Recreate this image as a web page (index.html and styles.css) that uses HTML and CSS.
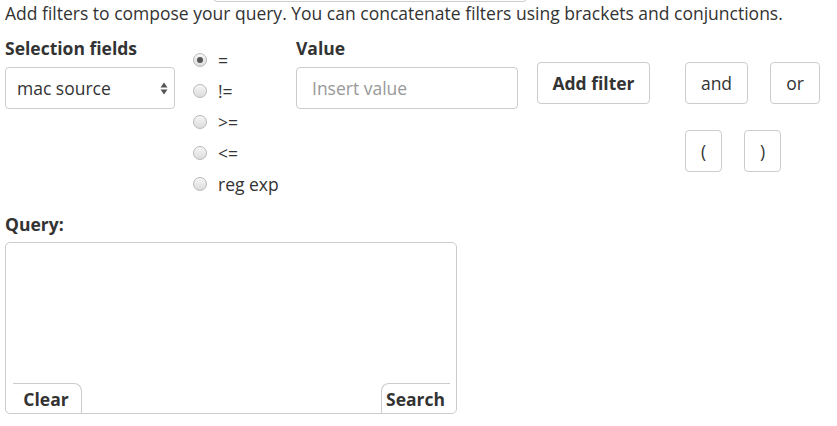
FILE: index.html
```html
<!DOCTYPE html>
<html>
<head>
<meta charset="utf-8">
<link rel="stylesheet" href="styles.css">
</head>
<body>
<div class="cut-box"></div>
<p class="intro">Add filters to compose your query. You can concatenate filters using brackets and conjunctions.</p>
<div class="filters">
  <div class="col-field">
    <div class="label">Selection fields</div>
    <div class="select">
      <span>mac source</span>
      <svg class="arrows" width="8" height="13" viewBox="0 0 8 13"><path d="M4 0.5 L7.5 5.5 L0.5 5.5 Z" fill="#555"/><path d="M0.5 7.5 L7.5 7.5 L4 12.5 Z" fill="#555"/></svg>
    </div>
  </div>
  <div class="col-ops">
    <label class="radio"><span class="dot checked"></span><span>=</span></label>
    <label class="radio"><span class="dot"></span><span>!=</span></label>
    <label class="radio"><span class="dot"></span><span>&gt;=</span></label>
    <label class="radio"><span class="dot"></span><span>&lt;=</span></label>
    <label class="radio"><span class="dot"></span><span>reg exp</span></label>
  </div>
  <div class="col-value">
    <div class="label">Value</div>
    <div class="input">Insert value</div>
  </div>
  <div class="col-add">
    <button class="btn btn-add">Add filter</button>
  </div>
  <div class="col-conj">
    <div class="conj-row">
      <button class="btn btn-and">and</button>
      <button class="btn btn-or">or</button>
    </div>
    <div class="bracket-row">
      <button class="btn btn-br">(</button>
      <button class="btn btn-br">)</button>
    </div>
  </div>
</div>
<div class="label query-label">Query:</div>
<div class="query-box">
  <div class="query-tabs">
    <button class="tab tab-clear">Clear</button>
    <button class="tab tab-search">Search</button>
  </div>
</div>
</body>
</html>
```

FILE: styles.css
```css
html, body {
  margin: 0;
  padding: 0;
  background: #fff;
}
body {
  font-family: "Open Sans", "Noto Sans", sans-serif;
  font-size: 17.5px;
  color: #333;
  padding-left: 5px;
  overflow: hidden;
}
.cut-box {
  width: 314px;
  height: 42px;
  margin-top: -40px;
  margin-left: 208px;
  border: 1px solid #ccc;
  border-radius: 4px;
  box-sizing: border-box;
}
.intro {
  margin: 0;
  margin-top: -1px;
  line-height: 24px;
  white-space: nowrap;
}
.filters {
  display: flex;
  align-items: flex-start;
  margin-top: 11px;
}
.label {
  font-weight: 700;
  line-height: 24px;
}
.col-field {
  width: 170px;
  display: flex;
  flex-direction: column;
}
.select {
  margin-top: 7px;
  box-sizing: border-box;
  height: 42px;
  border: 1px solid #ccc;
  border-radius: 4px;
  display: flex;
  align-items: center;
  justify-content: space-between;
  padding: 0 6px 0 11px;
}
.arrows {
  display: block;
}
.col-ops {
  width: 85px;
  margin-left: 18px;
  margin-top: 8px;
  display: flex;
  flex-direction: column;
}
.radio {
  height: 31px;
  display: flex;
  align-items: center;
  line-height: 20px;
  white-space: nowrap;
}
.dot {
  box-sizing: border-box;
  flex: none;
  width: 14px;
  height: 14px;
  border-radius: 50%;
  border: 1px solid #b9b9b9;
  background: linear-gradient(#f6f6f6, #dcdcdc);
  margin-right: 11px;
  display: flex;
  align-items: center;
  justify-content: center;
}
.dot.checked::after {
  content: "";
  width: 6px;
  height: 6px;
  border-radius: 50%;
  background: #555;
}
.col-value {
  margin-left: 18px;
  width: 222px;
  display: flex;
  flex-direction: column;
}
.input {
  margin-top: 7px;
  box-sizing: border-box;
  height: 42px;
  border: 1px solid #ccc;
  border-radius: 4px;
  display: flex;
  align-items: center;
  padding-left: 15px;
  color: #999;
}
.btn {
  font-family: inherit;
  font-size: 17.5px;
  color: #333;
  background: #fff;
  border: 1px solid #ccc;
  border-radius: 4px;
  height: 42px;
  padding: 0;
  box-sizing: border-box;
}
.col-add {
  margin-left: 19px;
  margin-top: 26px;
}
.btn-add {
  width: 113px;
  font-weight: 700;
}
.col-conj {
  margin-left: 35px;
  margin-top: 26px;
  display: flex;
  flex-direction: column;
}
.conj-row {
  display: flex;
  gap: 22px;
}
.btn-and {
  width: 63px;
}
.btn-or {
  width: 50px;
}
.bracket-row {
  display: flex;
  gap: 22px;
  margin-top: 26px;
}
.btn-br {
  width: 37px;
}
.query-label {
  margin-top: 13px;
}
.query-box {
  margin-top: 6px;
  box-sizing: border-box;
  width: 452px;
  height: 172px;
  border: 1px solid #ccc;
  border-radius: 5px;
  display: flex;
  flex-direction: column;
  justify-content: flex-end;
}
.query-tabs {
  display: flex;
  justify-content: space-between;
  padding: 0 6px 0 7px;
}
.tab {
  font-family: inherit;
  font-size: 17.5px;
  font-weight: 700;
  color: #333;
  background: #fff;
  height: 30px;
  box-sizing: border-box;
  padding: 0;
  border: 1px solid #ccc;
  border-bottom: none;
}
.tab-clear {
  width: 69px;
  border-left: none;
  border-top-right-radius: 8px;
  padding-right: 2px;
}
.tab-search {
  width: 69px;
  border-right: none;
  border-top-left-radius: 8px;
  padding-right: 1px;
}
```
